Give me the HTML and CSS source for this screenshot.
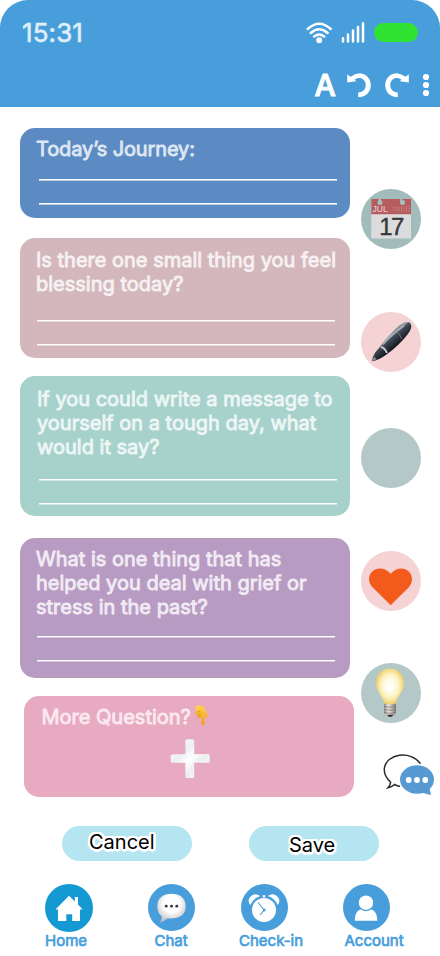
FILE: index.html
```html
<!DOCTYPE html>
<html lang="en">
<head>
<meta charset="utf-8">
<meta name="viewport" content="width=device-width, initial-scale=1">
<title>Journal</title>
<link rel="stylesheet" href="styles.css">
</head>
<body>
<div class="app">
  <header class="header">
    <div class="status">
      <span class="time">15:31</span>
      <svg class="wifi" width="28" height="24" viewBox="0 0 28 24" fill="none" stroke="#fff" stroke-width="2.5" stroke-linecap="round"><path d="M1.700 9Q13.200-1.400 24.700 9M4.800 13Q13.200 5.500 21.600 13M8.200 16.500Q13.200 12.500 18.200 16.500"/><circle cx="13.200" cy="20.300" r="2.200" fill="#fff" stroke-width="1.600"/></svg>
      <svg class="signal" width="24" height="24" viewBox="0 0 24 24" stroke="#fff" stroke-width="2.5" stroke-linecap="round"><path d="M2 17.200V20.600M7 13.500V20.600M12 9.500V20.600M17 6V20.600M22 2.200V20.600"/></svg>
      <span class="battery"></span>
    </div>
    <div class="tools">
      <span class="letter">A</span>
      <svg class="undo" width="24" height="26" viewBox="0 0 24 26"><path d="M.2 2.200 3.500 4.800Q11-1.200 18 2.700C25.500 7 26 18.800 18 23.600Q15.500 25.200 11.200 25.200V20.400C16 20 18.600 17.600 18.700 13.200C18.800 7 12.500 4 7.500 7.700L9.300 9.300.2 10.500Z" fill="#fff"/></svg>
      <svg class="redo" width="24" height="26" viewBox="0 0 24 26"><path d="M23.800 2.200 20.500 4.800Q13-1.200 6 2.700C-1.500 7-2 18.800 6 23.600Q8.500 25.200 12.800 25.200V20.400C8 20 5.400 17.600 5.300 13.200C5.200 7 11.500 4 16.500 7.700L14.700 9.300 23.800 10.500Z" fill="#fff"/></svg>
      <svg class="dots" width="8" height="24" viewBox="0 0 8 24" fill="#fff"><circle cx="4" cy="4" r="3.100"/><circle cx="4" cy="12" r="3.100"/><circle cx="4" cy="20" r="3.100"/></svg>
    </div>
  </header>

  <main class="board">
    <section class="cards">
      <article class="card journey"><h2>Today’s Journey:</h2><div class="rule"></div><div class="rule"></div></article>
      <article class="card blessing"><h2>Is there one small thing you feel<br>blessing today?</h2><div class="rule"></div><div class="rule"></div></article>
      <article class="card message"><h2>If you could write a message to<br>yourself on a tough day, what<br>would it say?</h2><div class="rule"></div><div class="rule"></div></article>
      <article class="card past"><h2>What is one thing that has<br>helped you deal with grief or<br>stress in the past?</h2><div class="rule"></div><div class="rule"></div></article>
      <article class="card more">
        <div class="more-title"><h2>More Question?</h2>
          <svg width="15" height="21" viewBox="0 0 15 21"><defs><linearGradient id="hand" x2="0" y2="1"><stop stop-color="#ffd04d"/><stop offset="1" stop-color="#efa013"/></linearGradient></defs><path d="M1.500 1.500Q1.800.5 3.200.6L8.500 1Q9.800 1.200 10.300 2.500L13.700 10.500Q14.200 12.300 12.700 12.700Q11.900 12.800 11.400 12L10.500 10.800V18.700Q10.300 20 9 20Q7.500 20 7.400 18.700L7 12.500Q4.500 13.200 3.900 11.500Q2 11.500 2.200 9.500Q.6 8.500 1.500 6.500Z" fill="url(#hand)"/><path d="M2.500 7.500Q4 5.900 6.500 6.700M2.800 10Q4.500 8.400 6.800 9.300M4 11.800Q5.500 10.800 7 11.200" fill="none" stroke="#c87c12" stroke-width=".6"/></svg>
        </div>
        <svg class="plus" width="40" height="40" viewBox="0 0 40 40"><defs><linearGradient id="plus" x2="1" y2="1"><stop stop-color="#fff"/><stop offset=".35" stop-color="#eceff1"/><stop offset=".5" stop-color="#fff"/><stop offset=".65" stop-color="#eceef0"/><stop offset="1" stop-color="#fff"/></linearGradient></defs><path d="M17 .3H22.500Q24.200.3 24.200 1.800V15.300L38.200 15Q39.700 15 39.700 16.500V22.300Q39.700 23.700 38.200 23.700H24.200V37.500Q24.200 39 22.700 39H17Q15.400 39 15.400 37.500V23.700H2.200Q.7 23.700 .7 22.300V17Q.7 15.400 2.200 15.400L15.400 15V1.800Q15.400.3 17 .3Z" fill="url(#plus)"/></svg>
      </article>
    </section>

    <aside class="shortcuts">
      <div class="bubble date">
        <svg width="60" height="60" viewBox="0 0 60 60"><path fill="#dcdcdd" d="M10.300 10H50V49.500H10.300Z"/><path fill="#b55d5e" d="M10.300 10H50V25.300H10.300Z"/><path d="M18.800 9V13M40.300 9V13" stroke="#aabfbf" stroke-width="2"/><circle cx="19" cy="13.500" r="2.500" fill="#a8c0c0"/><circle cx="41.500" cy="13.500" r="2.500" fill="#a8c0c0"/><text x="11.500" y="22.500" class="month">JUL</text><path d="M33 18V22.800M35.500 18V22.800M38 17.500V22.800M40.500 17.500V22.800M43 17.500V22.800M45.500 17V22.800M48 17V22.800" stroke="#d29394" stroke-width=".9" stroke-dasharray="1 .7"/><text x="30" y="45.500" text-anchor="middle" class="day">17</text></svg>
      </div>
      <div class="bubble pen">
        <svg width="60" height="60" viewBox="0 0 60 60"><defs><linearGradient id="pen" x1=".35" y1=".3" x2=".65" y2=".65"><stop stop-color="#273039"/><stop offset=".25" stop-color="#9aa5ae"/><stop offset=".4" stop-color="#3f4a54"/><stop offset="1" stop-color="#090e14"/></linearGradient></defs><path d="M11 49.200Q11.500 44.500 14.500 40L18 36Q26 24.500 38.500 13.500Q46.500 8 49.500 11.400Q52 15.500 46.500 22.500Q38 33.500 25.500 42.500Q17.500 48.500 11 49.200Z" fill="url(#pen)"/><path d="M22 32.500Q31 21.500 43 13.800" stroke="#a8b1b7" stroke-width="1.500" fill="none"/><path d="M20 35Q24 36 26 41" stroke="#c2c7ca" stroke-width="2" fill="none"/><path d="M34 18.500Q38.500 21 41 27" stroke="#87929b" stroke-width=".7" fill="none"/><path d="M11 49.200 13.200 44.500 15.500 47.200Z" fill="#8a8f93"/></svg>
      </div>
      <div class="bubble blank"></div>
      <div class="bubble love">
        <svg width="60" height="60" viewBox="0 0 60 60"><path d="M29.700 54.300 11 35.800Q8 32.500 8 28.500C8 17 22 13.500 29.700 22.700C37.500 13.500 51 17 51 28.500Q51 32.500 48.300 35.800Z" fill="#f35b1c"/></svg>
      </div>
      <div class="bubble idea">
        <svg width="60" height="60" viewBox="0 0 60 60"><defs><radialGradient id="bulb" cy=".48"><stop offset=".25" stop-color="#fffef6"/><stop offset=".65" stop-color="#fcf3c0"/><stop offset="1" stop-color="#efd06e"/></radialGradient><linearGradient id="screw"><stop stop-color="#8b8884"/><stop offset=".35" stop-color="#ebe6df"/><stop offset=".65" stop-color="#bab6b0"/><stop offset="1" stop-color="#7c7873"/></linearGradient></defs><path d="M23 41C22.500 33 15 29 15 20C15 .5 43 .5 43 20C43 29 35.500 33 35 41Q29 42.500 23 41Z" fill="url(#bulb)"/><path d="M23 40.500Q29 41.800 35 40.500V50L31.500 53.500H26.500L23 50Z" fill="url(#screw)"/><path d="M23 43.500Q29 45 35 43.500M23 46.500Q29 48 35 46.500M23 49.500Q29 51 35 49.500" fill="none" stroke="#77736f" stroke-width=".7"/><path d="M26 51.800H32.500Q31 54 29 54Q27 54 26 51.800Z" fill="#34312f"/></svg>
      </div>
      <svg class="talk" width="54" height="44" viewBox="0 0 54 44"><path d="M37.500 10.800C28-3 3 .5 1.300 15.500Q.8 23 7.500 29Q7.800 31.500 5 34.800Q9.500 33.500 11.500 31.500Q14.500 33.300 17 33.200" fill="none" stroke="#29292c" stroke-width="1.500"/><ellipse cx="34" cy="26.500" rx="17" ry="14.300" fill="#5799d2"/><path d="M38 39.500 48 42 46.500 35Z" fill="#5799d2"/><g fill="#fff"><circle cx="25.700" cy="27" r="2.900"/><circle cx="34" cy="27" r="2.900"/><circle cx="42.300" cy="27" r="2.900"/></g></svg>
    </aside>
  </main>

  <div class="actions">
    <button class="btn cancel">Cancel</button>
    <button class="btn save">Save</button>
  </div>

  <nav class="nav">
    <a class="tab home"><svg width="48" height="48" viewBox="0 0 48 48"><circle cx="24" cy="24" r="24" fill="#1499d3"/><path d="M24 11.800 29.800 17.500V13H33V20.500L37.700 25.500H35V37H27.200V30.300H21.300V37H13V25.500H10.500Z" fill="#fff"/></svg><span>Home</span></a>
    <a class="tab chat"><svg width="47" height="47" viewBox="0 0 47 47"><defs><radialGradient id="speech" cy=".35" r=".65"><stop offset=".45" stop-color="#fff"/><stop offset="1" stop-color="#bebfc1"/></radialGradient></defs><circle cx="23.500" cy="23.500" r="23.500" fill="#479edb"/><path d="M23.500 9.700C32 9.700 37.700 14 37.700 22.200S32 34.500 22.500 34.500H19Q16 38 11.500 38.700Q14 36.500 13.500 32.300Q9.300 29 9.300 22.200C9.300 14 15 9.700 23.500 9.700Z" fill="url(#speech)"/><g fill="#333"><circle cx="18.200" cy="22.200" r="1.400"/><circle cx="23.500" cy="22.200" r="1.400"/><circle cx="28.800" cy="22.200" r="1.400"/></g></svg><span>Chat</span></a>
    <a class="tab checkin"><svg width="47" height="47" viewBox="0 0 47 47"><circle cx="23.500" cy="23.500" r="23.500" fill="#479edb"/><circle cx="23" cy="26" r="12" fill="#fff"/><path d="M9.300 21Q6 16.500 9.200 13Q13 8.300 19.300 12Q12.500 14 9.300 21ZM36.700 21Q40 16.500 36.800 13Q33 8.300 26.700 12Q33.500 14 36.700 21Z" fill="#fff"/><circle cx="23" cy="12.200" r="1.300" fill="#fff"/><path d="M17 18.500 23.200 26 19.200 31" fill="none" stroke="#479edb" stroke-width="1.100"/><circle cx="23.200" cy="26" r="1.400" fill="#479edb"/></svg><span>Check-in</span></a>
    <a class="tab account"><svg width="47" height="47" viewBox="0 0 47 47"><circle cx="23.500" cy="23.500" r="23.500" fill="#479edb"/><path d="M11.800 36.800C11.800 30 14.500 26 18 25.500Q23 29 28 25.500C31.500 26 34.300 30 34.300 36.800Z" fill="#fff"/><circle cx="23" cy="18.700" r="7.200" fill="#fff"/></svg><span>Account</span></a>
  </nav>
</div>
</body>
</html>
```
FILE: styles.css
```css
* { box-sizing: border-box; }
body { margin: 0; background: #fff; font-family: Inter, sans-serif; }
svg { display: block; flex: none; }
.app { width: 440px; height: 956px; overflow: hidden; display: flex; flex-direction: column; }

.header { height: 107px; flex: none; background: #479edb; border-radius: 28px 28px 0 0; padding: 18px 0 0; }
.status { display: flex; height: 30px; padding-left: 22px; }
.time { width: 284px; color: #dfeffa; font-size: 26px; line-height: 30px; letter-spacing: .1px; -webkit-text-stroke: .6px #dfeffa; }
.wifi { margin-top: 2px; }
.signal { margin: 3px 0 0 7px; }
.battery { width: 44px; height: 19px; margin: 5px 0 0 9px; border-radius: 9.5px; background: #30e333; }
.tools { display: flex; padding-left: 314.5px; margin-top: 24px; }
.letter { width: 32px; color: #fff; font-size: 30px; line-height: 27px; font-weight: 500; -webkit-text-stroke: 1px #fff; }
.redo { margin-left: 14px; }
.dots { margin: 1px 0 0 13.5px; }

.board { display: flex; flex: none; height: 690px; }
.cards { width: 361px; padding: 21px 0 0 20px; }
.card { width: 330px; border-radius: 15px; padding: 9px 0 0 16px; }
.card h2 { margin: 0; font-size: 20px; line-height: 24px; font-weight: 400; white-space: nowrap; color: var(--ink); -webkit-text-stroke: .85px var(--ink); }
.rule { width: 298px; height: 2px; margin: 22px 0 0; background: linear-gradient(var(--line) 50%, var(--line-soft) 50%); }
.card h2 + .rule { margin-top: 18px; }
.journey { --ink: #dde7f3; --line: #fff; --line-soft: #b9cde5; height: 90px; background: #5c8ac2; }
.journey h2 { letter-spacing: -.12px; }
.journey .rule { margin-left: 3px; }
.blessing { --ink: #f6f1f2; --line: #fff; --line-soft: #e7d8db; height: 120px; margin-top: 20px; padding-top: 10px; background: #d3b7bc; }
.blessing .rule { margin-left: 1px; }
.card.blessing h2 + .rule { margin-top: 24px; }
.message { --ink: #edf6f5; --line: #fff; --line-soft: #d2e8e5; height: 140px; margin-top: 18px; padding: 11px 0 0 17px; background: #a7d2cb; }
.message .rule { margin-left: 2px; }
.card.message h2 + .rule { margin-top: 20px; }
.past { --ink: #f1ebf4; --line: #fff; --line-soft: #d5c4dd; height: 140px; margin-top: 22px; background: #b89bc2; }
.past .rule { margin-left: 1px; }
.card.past h2 + .rule { margin-top: 17px; }
.more { --ink: #fae9f0; height: 101px; margin: 18px 0 0 4px; padding-left: 17.5px; background: #e8aac0; }
.more-title { display: flex; gap: 3px; }
.plus { margin: 10px 0 0 128.5px; }

.shortcuts { padding-top: 82px; }
.bubble { width: 60px; height: 60px; border-radius: 50%; background: #b4c8c7; }
.date { background: #a2bcbc; }
.pen { margin-top: 63px; background: #f5d2d3; }
.blank { margin-top: 56px; }
.love { margin-top: 63px; background: #f5d2d3; }
.idea { margin-top: 52px; }
.month { font: 8.5px "Liberation Sans", sans-serif; fill: #eadada; }
.day { font: 400 24px "Liberation Sans", sans-serif; letter-spacing: -1.5px; fill: #373839; stroke: #373839; stroke-width: .4; }
.talk { margin: 30px 0 0 22px; }

.actions { display: flex; gap: 57px; flex: none; padding: 29px 0 0 62px; }
.btn { width: 130px; height: 35px; border: 0; border-radius: 17.5px; padding: 0; background: #b4e5f0; color: #000; font: 20px/24px Inter, sans-serif; text-align: left; text-shadow: 2.5px 0 #fff, -2.5px 0 #fff, 0 2.5px #fff, 0 -2.5px #fff, 1.8px 1.8px #fff, -1.8px 1.8px #fff, 1.8px -1.8px #fff, -1.8px -1.8px #fff, 1px 2.3px #fff, -1px 2.3px #fff, 1px -2.3px #fff, -1px -2.3px #fff; }
.cancel { padding: 0 0 4px 27px; }
.save { padding: 2px 0 0 40px; }

.nav { display: flex; flex: none; padding: 23px 0 0 45px; }
.tab { width: 48px; height: 70px; display: flex; flex-direction: column; color: #479edb; font-size: 15px; line-height: 17px; white-space: nowrap; }
.tab span { -webkit-text-stroke: .7px #479edb; }
.tab:not(.home) span { margin-top: 1px; }
.chat { margin-left: 55px; }
.chat span { padding-left: 6.5px; }
.checkin { margin-left: 45px; }
.checkin span { margin-left: -2px; }
.account { margin-left: 54px; }
.account span { padding-left: 1.5px; }
```
